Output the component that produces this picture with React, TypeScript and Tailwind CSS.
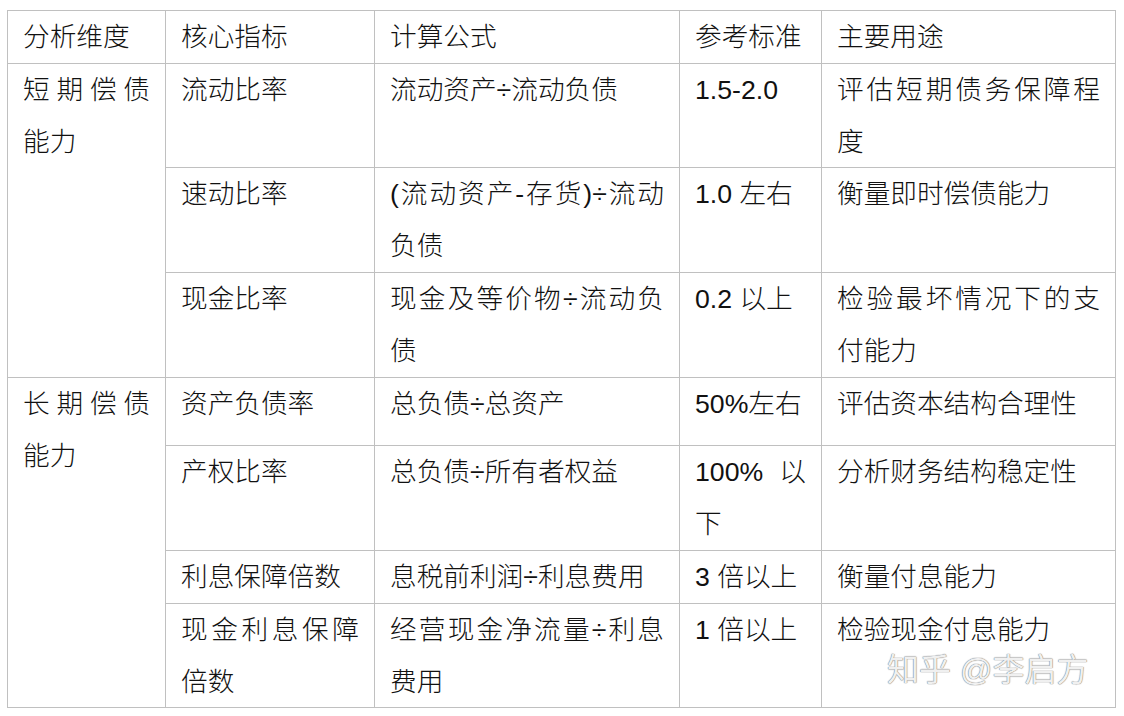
import React from "react";

const font = "font-['Liberation_Sans','Noto_Sans_CJK_SC',sans-serif]";

const cellBase =
  "border-r border-b border-[#c0c0c0] px-[15px] text-[26.67px] leading-[52px] font-light text-[#111] [text-align:justify] [text-justify:inter-character] overflow-hidden";

export default function App() {
  const header = ["分析维度", "核心指标", "计算公式", "参考标准", "主要用途"];
  const rows: string[][] = [
    ["流动比率", "流动资产÷流动负债", "1.5-2.0", "评估短期债务保障程度"],
    ["速动比率", "(流动资产-存货)÷流动负债", "1.0 左右", "衡量即时偿债能力"],
    ["现金比率", "现金及等价物÷流动负债", "0.2 以上", "检验最坏情况下的支付能力"],
    ["资产负债率", "总负债÷总资产", "50%左右", "评估资本结构合理性"],
    ["产权比率", "总负债÷所有者权益", "100% 以下", "分析财务结构稳定性"],
    ["利息保障倍数", "息税前利润÷利息费用", "3 倍以上", "衡量付息能力"],
    ["现金利息保障倍数", "经营现金净流量÷利息费用", "1 倍以上", "检验现金付息能力"],
  ];
  const rowStarts = [
    "row-start-2",
    "row-start-3",
    "row-start-4",
    "row-start-5",
    "row-start-6",
    "row-start-7",
    "row-start-8",
  ];
  const colStarts = ["col-start-2", "col-start-3", "col-start-4", "col-start-5"];
  return (
    <div className={`relative w-[1124px] h-[716px] bg-white ${font}`} lang="zh-CN">
      <div className="pt-[10px] pl-[7px]">
        <div className="grid grid-cols-[158px_209px_305px_142px_294px] grid-rows-[53px_104px_105px_105px_68px_105px_53px_104px] w-fit border-t border-l border-[#c0c0c0]">
          {header.map((h) => (
            <div key={h} className={cellBase}>
              {h}
            </div>
          ))}
          <div className={`${cellBase} col-start-1 row-start-2 row-span-3`}>短期偿债能力</div>
          <div className={`${cellBase} col-start-1 row-start-5 row-span-4`}>长期偿债能力</div>
          {rows.map((r, i) =>
            r.map((t, j) => (
              <div key={`${i}-${j}`} className={`${cellBase} ${rowStarts[i]} ${colStarts[j]}`}>
                {t}
              </div>
            ))
          )}
        </div>
      </div>
      <div className="absolute left-[887px] top-[646px] text-[32px] leading-[48px] text-[#f0f0f0] [text-shadow:0_0_1px_#777,0_0_1px_#777] whitespace-nowrap">
        知乎 @李启方
      </div>
    </div>
  );
}
